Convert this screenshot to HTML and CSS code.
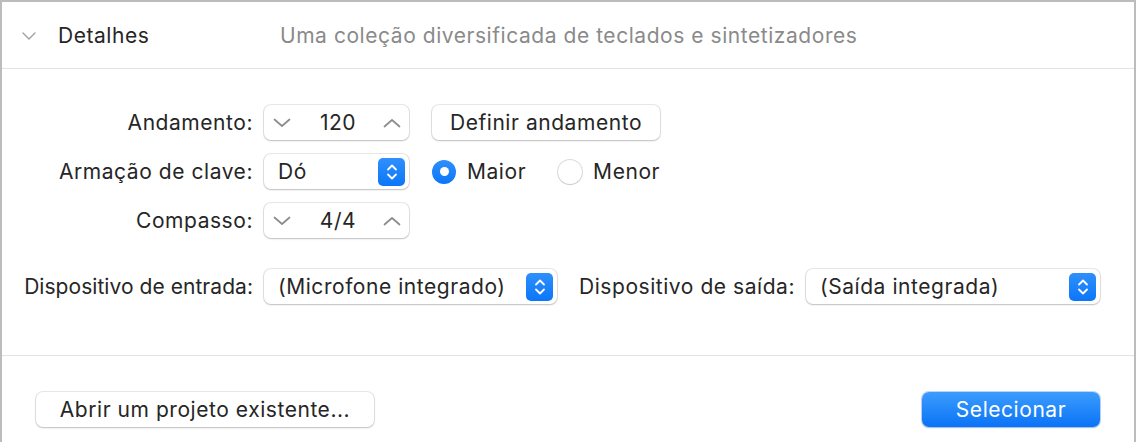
FILE: index.html
```html
<!DOCTYPE html>
<html lang="pt">
<head>
<meta charset="utf-8">
<link rel="stylesheet" href="styles.css">
</head>
<body>
<div class="window">
  <div class="header">
    <svg class="disclosure" width="14" height="8" viewBox="0 0 14 8"><path d="M1 1 L7 7 L13 1" fill="none" stroke="#a0a0a0" stroke-width="1.4" stroke-linecap="round" stroke-linejoin="round"/></svg>
    <span class="title">Detalhes</span>
    <span class="desc">Uma coleção diversificada de teclados e sintetizadores</span>
  </div>
  <div class="form">
    <div class="label">Andamento:</div>
    <div class="controls">
      <div class="ctrl stepper">
        <svg class="chev" width="18" height="10" viewBox="0 0 18 10"><path d="M1.5 1.5 L9 8 L16.5 1.5" fill="none" stroke="#8c8c8c" stroke-width="1.7" stroke-linecap="round" stroke-linejoin="round"/></svg>
        <span class="val">120</span>
        <svg class="chev" width="18" height="10" viewBox="0 0 18 10"><path d="M1.5 8.5 L9 2 L16.5 8.5" fill="none" stroke="#8c8c8c" stroke-width="1.7" stroke-linecap="round" stroke-linejoin="round"/></svg>
      </div>
      <div class="ctrl button tempo">Definir andamento</div>
    </div>
    <div class="label">Armação de clave:</div>
    <div class="controls">
      <div class="ctrl popup key">
        <span class="ptext">Dó</span>
        <span class="arrows"><svg width="12" height="18" viewBox="0 0 12 18"><path d="M2 6.5 L6 2.5 L10 6.5 M2 11.5 L6 15.5 L10 11.5" fill="none" stroke="#fff" stroke-width="1.8" stroke-linecap="round" stroke-linejoin="round"/></svg></span>
      </div>
      <div class="radio on"><span class="dot"></span></div>
      <span class="rlabel">Maior</span>
      <div class="radio off"></div>
      <span class="rlabel">Menor</span>
    </div>
    <div class="label">Compasso:</div>
    <div class="controls">
      <div class="ctrl stepper">
        <svg class="chev" width="18" height="10" viewBox="0 0 18 10"><path d="M1.5 1.5 L9 8 L16.5 1.5" fill="none" stroke="#8c8c8c" stroke-width="1.7" stroke-linecap="round" stroke-linejoin="round"/></svg>
        <span class="val">4/4</span>
        <svg class="chev" width="18" height="10" viewBox="0 0 18 10"><path d="M1.5 8.5 L9 2 L16.5 8.5" fill="none" stroke="#8c8c8c" stroke-width="1.7" stroke-linecap="round" stroke-linejoin="round"/></svg>
      </div>
    </div>
    <div class="label devrow tight">Dispositivo de entrada:</div>
    <div class="controls devrow">
      <div class="ctrl popup dev-in">
        <span class="ptext">(Microfone integrado)</span>
        <span class="arrows"><svg width="12" height="18" viewBox="0 0 12 18"><path d="M2 6.5 L6 2.5 L10 6.5 M2 11.5 L6 15.5 L10 11.5" fill="none" stroke="#fff" stroke-width="1.8" stroke-linecap="round" stroke-linejoin="round"/></svg></span>
      </div>
      <span class="label2">Dispositivo de saída:</span>
      <div class="ctrl popup dev-out">
        <span class="ptext">(Saída integrada)</span>
        <span class="arrows"><svg width="12" height="18" viewBox="0 0 12 18"><path d="M2 6.5 L6 2.5 L10 6.5 M2 11.5 L6 15.5 L10 11.5" fill="none" stroke="#fff" stroke-width="1.8" stroke-linecap="round" stroke-linejoin="round"/></svg></span>
      </div>
    </div>
  </div>
  <div class="footer">
    <div class="ctrl button open">Abrir um projeto existente...</div>
    <div class="primary">Selecionar</div>
  </div>
</div>
</body>
</html>
```
FILE: styles.css
```css
* { box-sizing: border-box; }
html, body { margin: 0; padding: 0; background: #fff; }
body {
  font-family: Inter, "Noto Sans", "Liberation Sans", sans-serif;
  font-size: 21px;
  letter-spacing: 0.55px;
  color: #262626;
}
.window {
  width: 1136px;
  height: 442px;
  border-top: 2px solid #bcbcbc;
  border-left: 2px solid #bcbcbc;
  border-right: 2px solid #bcbcbc;
  display: flex;
  flex-direction: column;
}
.header {
  height: 67px;
  border-bottom: 1px solid #e2e2e2;
  display: flex;
  align-items: center;
  padding-left: 20px;
}
.disclosure { margin-top: 1px; flex: none; }
.title { margin-left: 22px; width: 222px; flex: none; }
.desc { color: #8a8a8a; white-space: nowrap; }
.form {
  display: grid;
  grid-template-columns: 229px 1fr;
  grid-template-rows: 49px 49px 49px 66px;
  column-gap: 11px;
  padding: 29px 0 0 22px;
  height: 287px;
  border-bottom: 1px solid #e2e2e2;
}
.label {
  display: flex;
  align-items: center;
  justify-content: flex-end;
  white-space: nowrap;
}
.label.tight { letter-spacing: 0.05px; }
.controls {
  display: flex;
  align-items: center;
  white-space: nowrap;
}
.devrow { padding-top: 17px; }
.ctrl {
  height: 35px;
  background: #fff;
  border-radius: 7px;
  box-shadow: 0 0 0 1px rgba(0,0,0,0.09), 0 1px 2px rgba(0,0,0,0.18);
  display: flex;
  align-items: center;
  flex: none;
}
.stepper {
  width: 145px;
  padding: 0 8px 0 9px;
  justify-content: space-between;
}
.stepper .val { flex: 1; text-align: center; margin-left: 2px; }
.button { justify-content: center; }
.tempo { width: 228px; margin-left: 23px; }
.popup {
  padding: 0 4px 0 14px;
  justify-content: space-between;
}
.key { width: 145px; }
.dev-in { width: 293px; }
.dev-out { width: 294px; }
.arrows {
  width: 27px;
  height: 28px;
  border-radius: 5px;
  background: linear-gradient(#2f90fc, #0b76f8);
  display: flex;
  align-items: center;
  justify-content: center;
  flex: none;
}
.radio {
  width: 24px;
  height: 24px;
  border-radius: 50%;
  display: flex;
  align-items: center;
  justify-content: center;
  flex: none;
}
.radio.on {
  margin-left: 23px;
  background: linear-gradient(#2f90fc, #0b76f8);
}
.radio.on .dot {
  width: 9px;
  height: 9px;
  border-radius: 50%;
  background: #fff;
}
.radio.off {
  margin-left: 32px;
  background: #fff;
  box-shadow: 0 0 0 1px rgba(0,0,0,0.14), 0 1px 1px rgba(0,0,0,0.08);
}
.rlabel { margin-left: 11px; }
.label2 { margin-left: 22px; width: 227px; flex: none; }
.footer {
  flex: 1;
  display: flex;
  align-items: center;
  justify-content: space-between;
  padding: 20px 34px 0 34px;
}
.open { width: 338px; }
.primary {
  width: 178px;
  height: 35px;
  border-radius: 7px;
  background: linear-gradient(#3c9cfd, #0a73f7);
  box-shadow: 0 0 0 1px rgba(0,90,220,0.25), 0 1px 2px rgba(0,0,0,0.15);
  color: #fff;
  display: flex;
  align-items: center;
  justify-content: center;
}
```
